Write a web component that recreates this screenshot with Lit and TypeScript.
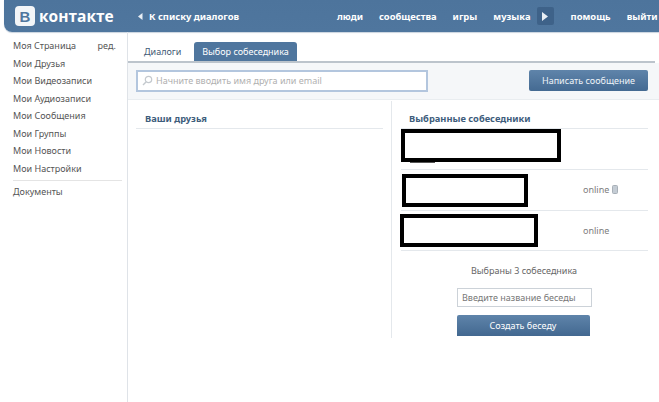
import { LitElement, html, css } from "lit";
import { customElement } from "lit/decorators.js";

@customElement("app-root")
export class AppRoot extends LitElement {
  static styles = css`
    :host { display: block; width: 659px; height: 402px; overflow: hidden; background: #fff; position: relative;
      font-family: "Noto Sans", "DejaVu Sans", sans-serif; font-size: 9px; color: #4a4a4a; }
    .top { margin-left: 4px; height: 32px; background: linear-gradient(#4d749c, #4f769e); border-radius: 0 0 0 8px;
      display: flex; align-items: center; color: #fff; font-weight: bold; font-size: 9.4px; box-shadow: 0 1px 1px #c9d3de; }
    .logo { margin-left: 11px; width: 20px; height: 20px; border-radius: 4px; background: #f2f5f8; color: #4f769e;
      display: flex; align-items: center; justify-content: center; font: bold 15px "Liberation Sans", sans-serif; flex: none; }
    .brand { margin-left: 4px; width: 99px; font: bold 15.5px "Open Sans", sans-serif; flex: none; }
    .back { display: flex; align-items: center; gap: 6px; width: 199px; flex: none; }
    .back svg { flex: none; }
    .nav { display: flex; align-items: center; gap: 16px; }
    .nav span { white-space: nowrap; }
    .play { width: 17px; height: 18px; border-radius: 2px; background: #3e6289; display: flex; align-items: center; justify-content: center; margin: 0 1px 0 -10px; }
    .body { display: flex; height: 370px; }
    .side { width: 127px; padding: 5px 0 0 13px; box-sizing: border-box; flex: none; color: #555; }
    .side a { display: flex; justify-content: space-between; height: 17.5px; align-items: center; padding-right: 11px; white-space: nowrap; }
    .side hr { border: 0; border-top: 1px solid #e4e4e4; margin: 3px 5px 2px 0; }
    .main { width: 532px; border-left: 1px solid #dfe3e8; box-sizing: border-box; flex: none; }
    .tabs { display: flex; align-items: flex-end; height: 28.5px; padding-left: 7px; border-bottom: 2px solid #bcc4cc; margin-right: 4px; }
    .tab { padding: 0 9px; height: 19px; width: 59px; box-sizing: border-box; white-space: nowrap; display: flex; align-items: center; border-radius: 3px 3px 0 0; color: #3f5a75; }
    .tab.on { background: #4f769e; color: #fff; width: 103px; justify-content: center; padding: 0; }
    .search { background: #f5f7f9; height: 37px; display: flex; align-items: center; justify-content: space-between;
      padding: 0 11px 0 8px; border-bottom: 1px solid #e9edf0; box-sizing: border-box; }
    .find { width: 292px; height: 22px; border: 2px solid #b3c6de; box-sizing: border-box; background: #fff; display: flex;
      align-items: center; gap: 3px; padding-left: 4px; color: #b0b0b0; }
    .send { width: 119px; height: 21px; background: linear-gradient(#5f84aa, #446a92); border-radius: 2px; color: #eef3f8;
      display: flex; align-items: center; justify-content: center; }
    .cols { display: flex; }
    .left { width: 263px; flex: none; padding: 1px 0 0 8px; box-sizing: border-box; }
    .right { width: 264px; height: 237px; flex: none; border-left: 1px solid #e4e8ec; box-sizing: border-box; padding-left: 9px; margin-top: 1px; }
    .h { height: 28px; padding: 8px 0 0 9px; display: flex; align-items: center; font-weight: bold; font-size: 9.3px; color: #3e5d7c; border-bottom: 1px solid #e4e8ec;
      box-sizing: border-box; margin-right: 8px; white-space: nowrap; }
    .right .h { margin-right: 7px; padding-left: 8px; }
    .row { height: 41px; border-bottom: 1px solid #e4e8ec; margin-right: 7px; box-sizing: border-box; display: flex; align-items: center;
      padding-left: 182px; color: #7d7d7d; gap: 3px; }
    .row.last { height: 40px; }
    .sum { display: flex; flex-direction: column; align-items: center; width: 264px; margin-left: -9px; }
    .count { margin-top: 14px; color: #666; height: 12px; line-height: 12px; }
    .name { margin-top: 11px; width: 135px; height: 19px; border: 1px solid #ccd2d8; box-sizing: border-box; color: #777; white-space: nowrap;
      display: flex; align-items: center; padding-left: 4px; margin-left: 1px; }
    .create { margin: 8px 2px 0 0; width: 133px; height: 21px; background: linear-gradient(#5f84aa, #426890); border-radius: 2px 2px 0 0;
      color: #fff; display: flex; align-items: center; justify-content: center; }
    .mask { position: absolute; border: 4px solid #000; box-sizing: border-box; background: #fff; }
    .m1 { left: 401px; top: 129px; width: 160px; height: 33px; }
    .m2 { left: 402px; top: 174px; width: 126px; height: 33px; }
    .m3 { left: 400px; top: 214px; width: 138px; height: 33px; }
    .stub { position: absolute; left: 410px; top: 161px; width: 25px; height: 2px; background: #555; }
  `;

  render() {
    const links = ["Моя Страница", "Мои Друзья", "Мои Видеозаписи", "Мои Аудиозаписи", "Мои Сообщения", "Мои Группы", "Мои Новости", "Мои Настройки"];
    return html`
      <div class="top">
        <div class="logo">В</div>
        <div class="brand">контакте</div>
        <div class="back">
          <svg width="5" height="7" viewBox="0 0 5 7"><path d="M4.5 0 L0 3.5 L4.5 7Z" fill="#e8eef4"/></svg>
          <span>К списку диалогов</span>
        </div>
        <div class="nav">
          <span>люди</span>
          <span>сообщества</span>
          <span>игры</span>
          <span>музыка</span>
          <div class="play">
            <svg width="6" height="9" viewBox="0 0 6 9"><path d="M0 0 L6 4.5 L0 9Z" fill="#e8eef4"/></svg>
          </div>
          <span>помощь</span>
          <span>выйти</span>
        </div>
      </div>
      <div class="body">
        <div class="side">
          ${links.map((l, i) => html`<a><span>${l}</span>${i === 0 ? html`<span>ред.</span>` : ""}</a>`)}
          <hr />
          <a><span>Документы</span></a>
        </div>
        <div class="main">
          <div class="tabs">
            <div class="tab">Диалоги</div>
            <div class="tab on">Выбор собеседника</div>
          </div>
          <div class="search">
            <div class="find">
              <svg width="11" height="11" viewBox="0 0 11 11"><circle cx="6.5" cy="4.5" r="3.2" fill="none" stroke="#c4c9ce" stroke-width="1.2"/><path d="M4 7 L1 10" stroke="#c4c9ce" stroke-width="1.5"/></svg>
              <span>Начните вводить имя друга или email</span>
            </div>
            <div class="send">Написать сообщение</div>
          </div>
          <div class="cols">
            <div class="left"><div class="h">Ваши друзья</div></div>
            <div class="right">
              <div class="h">Выбранные собеседники</div>
              <div class="row"></div>
              <div class="row">online
                <svg width="6" height="9" viewBox="0 0 6 9"><rect x=".5" y=".5" width="5" height="8" rx="1" fill="#c4ccd4" stroke="#a8b0b8"/></svg>
              </div>
              <div class="row last">online</div>
              <div class="sum">
                <div class="count">Выбраны 3 собеседника</div>
                <div class="name">Введите название беседы</div>
                <div class="create">Создать беседу</div>
              </div>
            </div>
          </div>
        </div>
      </div>
      <div class="stub"></div>
      <div class="mask m1"></div>
      <div class="mask m2"></div>
      <div class="mask m3"></div>
    `;
  }
}
